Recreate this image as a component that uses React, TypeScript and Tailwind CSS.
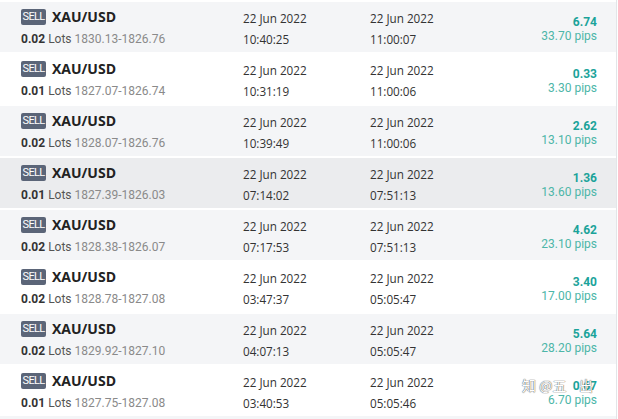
import React from 'react';

type Trade = {
  lots: string;
  range: string;
  openTime: string;
  closeTime: string;
  profit: string;
  pips: string;
};

const trades: Trade[] = [
  { lots: '0.02', range: '1830.13-1826.76', openTime: '10:40:25', closeTime: '11:00:07', profit: '6.74', pips: '33.70' },
  { lots: '0.01', range: '1827.07-1826.74', openTime: '10:31:19', closeTime: '11:00:06', profit: '0.33', pips: '3.30' },
  { lots: '0.02', range: '1828.07-1826.76', openTime: '10:39:49', closeTime: '11:00:06', profit: '2.62', pips: '13.10' },
  { lots: '0.01', range: '1827.39-1826.03', openTime: '07:14:02', closeTime: '07:51:13', profit: '1.36', pips: '13.60' },
  { lots: '0.02', range: '1828.38-1826.07', openTime: '07:17:53', closeTime: '07:51:13', profit: '4.62', pips: '23.10' },
  { lots: '0.02', range: '1828.78-1827.08', openTime: '03:47:37', closeTime: '05:05:47', profit: '3.40', pips: '17.00' },
  { lots: '0.02', range: '1829.92-1827.10', openTime: '04:07:13', closeTime: '05:05:47', profit: '5.64', pips: '28.20' },
  { lots: '0.01', range: '1827.75-1827.08', openTime: '03:40:53', closeTime: '05:05:46', profit: '0.67', pips: '6.70' },
];

const din = { fontFamily: 'Roboto, "Liberation Sans", sans-serif' };
const ui = { fontFamily: '"Open Sans", "Noto Sans", sans-serif' };

function TradeRow({ trade, index }: { trade: Trade; index: number }) {
  const bg = index === 3 ? 'bg-[#ebecee]' : index % 2 === 0 ? 'bg-[#f4f5f7]' : 'bg-white';
  return (
    <div className={`grid h-[52px] grid-cols-[222px_127px_1fr_auto] border-t-2 border-white pl-[21px] pr-[19px] ${bg}`}>
      <div className="pt-[7px]">
        <div className="flex h-[16px] items-center gap-[6px]">
          <span
            style={din}
            className="flex h-[16px] w-[25px] items-center justify-center rounded-[2px] bg-[#5b6578] text-[11px] tracking-[-0.7px] text-white"
          >
            SELL
          </span>
          <span style={ui} className="text-[14px] font-bold leading-none text-[#222]">
            XAU/USD
          </span>
        </div>
        <div style={din} className="mt-[6px] text-[12px] leading-[16px]">
          <span className="font-bold text-[#333]">{trade.lots}</span>{' '}
          <span className="text-[#555]">Lots</span>{' '}
          <span className="text-[#8a8a8a]">{trade.range}</span>
        </div>
      </div>
      <div style={ui} className="pt-[6px] text-[11.7px] leading-[21px] text-[#333]">
        <div>22 Jun 2022</div>
        <div>{trade.openTime}</div>
      </div>
      <div style={ui} className="pt-[6px] text-[11.7px] leading-[21px] text-[#333]">
        <div>22 Jun 2022</div>
        <div>{trade.closeTime}</div>
      </div>
      <div style={din} className="pt-[13px] text-right text-[12px] leading-[14px]">
        <div className="font-bold text-[#1ba39a]">{trade.profit}</div>
        <div className="text-[#4db6a8]">{trade.pips} pips</div>
      </div>
    </div>
  );
}

export default function App() {
  return (
    <div className="relative h-[419px] w-[618px] overflow-hidden bg-white">
      <div className="w-[617px] border-r border-[#e3e5e8]">
        {trades.map((t, i) => (
          <TradeRow key={i} trade={t} index={i} />
        ))}
        <div className="h-[6px] bg-[#f4f5f7]" />
      </div>
      <div
        className="absolute left-[522px] top-[375px] text-[14px] text-white [text-shadow:0_0_1px_#555,0_0_1px_#555]"
        style={{ fontFamily: '"Noto Sans CJK SC", sans-serif' }}
      >
        知 @五&nbsp;&nbsp;&nbsp;&nbsp;出
      </div>
    </div>
  );
}
